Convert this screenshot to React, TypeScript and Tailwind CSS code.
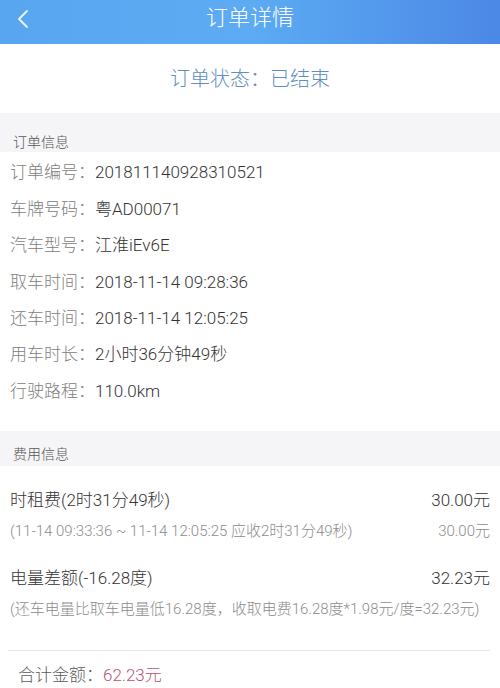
const orderRows = [
  ["订单编号：", "201811140928310521"],
  ["车牌号码：", "粤AD00071"],
  ["汽车型号：", "江淮iEv6E"],
  ["取车时间：", "2018-11-14 09:28:36"],
  ["还车时间：", "2018-11-14 12:05:25"],
  ["用车时长：", "2小时36分钟49秒"],
  ["行驶路程：", "110.0km"],
];

const font = { fontFamily: 'Roboto, "Noto Sans CJK SC", sans-serif' };

const App = () => {
  return (
    <div className="w-[500px] h-[688px] overflow-hidden bg-white font-light" style={font}>
      {/* header */}
      <div className="relative h-[44px] flex items-center justify-center pb-[8px] bg-gradient-to-r from-[#58a6ef] via-[#5cabf3] to-[#4c88e6]">
        <svg className="absolute left-[15px] top-[9px]" width="16" height="20" viewBox="0 0 16 20">
          <path d="M12 2 L4 10 L12 18" fill="none" stroke="#eef5ff" strokeWidth="1.8" strokeLinecap="round" strokeLinejoin="round" />
        </svg>
        <span className="text-[22px] leading-[28px] text-white">订单详情</span>
      </div>

      {/* status */}
      <div className="h-[69px] flex items-center justify-center">
        <span className="text-[20px] text-[#5f8fc0]">订单状态：已结束</span>
      </div>

      {/* order info */}
      <div className="h-[39px] bg-[#f5f5f7] pl-[13px] pt-[20px]">
        <span className="block text-[14px] leading-[18px] text-[#555]">订单信息</span>
      </div>
      <div className="pt-[3px] pl-[10px]">
        {orderRows.map(([label, value]) => (
          <div key={label} className="h-[36.4px] flex items-center text-[17px]">
            <span className="text-[#808080]">{label}</span>
            <span className="text-[#333]">{value}</span>
          </div>
        ))}
      </div>

      {/* fee info */}
      <div className="mt-[21px] h-[35px] bg-[#f5f5f7] pl-[13px] pt-[14px]">
        <span className="block text-[14px] leading-[18px] text-[#555]">费用信息</span>
      </div>
      <div className="pl-[10px] pr-[10px] pt-[21px]">
        <div className="h-[28px] flex items-center justify-between text-[17px] text-[#333]">
          <span>时租费(2时31分49秒)</span>
          <span>30.00元</span>
        </div>
        <div className="mt-[5px] h-[24px] flex items-center justify-between text-[15px] text-[#8c8c8c]">
          <span>(11-14 09:33:36 ~ 11-14 12:05:25 应收2时31分49秒)</span>
          <span>30.00元</span>
        </div>
        <div className="mt-[21px] h-[28px] flex items-center justify-between text-[17px] text-[#333]">
          <span>电量差额(-16.28度)</span>
          <span>32.23元</span>
        </div>
        <div className="mt-[5px] h-[24px] flex items-center text-[15px] text-[#8c8c8c]">
          <span>(还车电量比取车电量低16.28度，收取电费16.28度*1.98元/度=32.23元)</span>
        </div>
      </div>
      <div className="mt-[28px] ml-[8px] mr-[10px] h-px bg-[#e6e6e6]" />
      <div className="mt-[11px] h-[28px] flex items-center pl-[18px] text-[17px]">
        <span className="text-[#5a5a5a]">合计金额：</span>
        <span className="text-[#b5546d]">62.23元</span>
      </div>
    </div>
  );
};

export default App;
